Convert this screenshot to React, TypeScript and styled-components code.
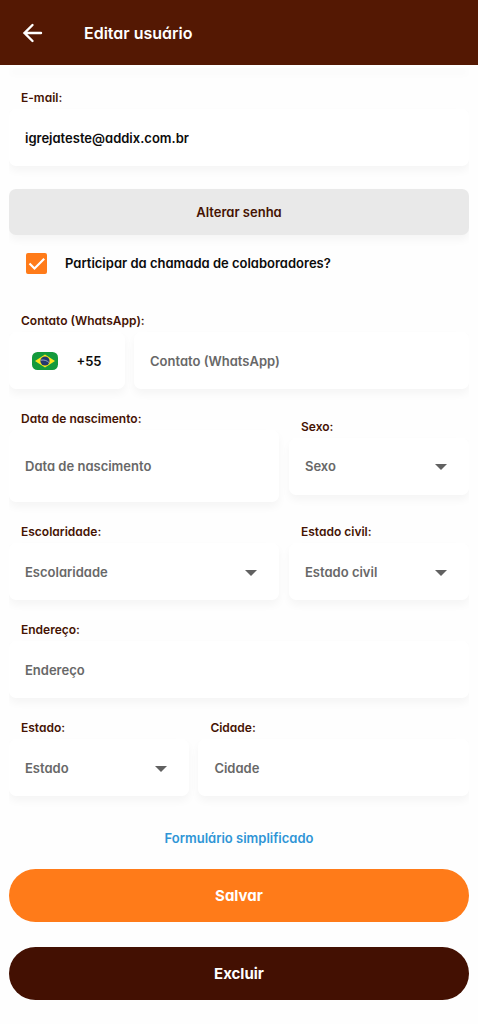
import React from "react";
import styled, { createGlobalStyle, css } from "styled-components";

const color = {
  header: "#541803",
  label: "#451303",
  page: "#fefefe",
  muted: "#686868",
  orange: "#ff7b19",
  dark: "#431002",
  link: "#2f95d6",
};

const GlobalStyle = createGlobalStyle`
  *, *::before, *::after { box-sizing: border-box; }
  body {
    margin: 0;
    background: ${color.page};
    color: #0c0c0c;
    font-family: Inter, "Liberation Sans", sans-serif;
    font-feature-settings: "cv11" 1;
  }
  button, input, select {
    font: inherit;
    font-feature-settings: inherit;
    color: inherit;
  }
`;

const raised = css`
  background: #ffffff;
  border-radius: 7px;
  box-shadow: 0 5px 8px rgba(0, 0, 0, 0.04);
`;

const Header = styled.header`
  position: relative;
  z-index: 1;
  display: flex;
  align-items: center;
  gap: 36px;
  height: 65px;
  padding: 0 18px;
  background: ${color.header};
  color: #ffffff;
`;

const BackButton = styled.button`
  display: flex;
  padding: 0;
  border: 0;
  background: none;
  cursor: pointer;
`;

const Title = styled.h1`
  margin: 0;
  font-size: 16px;
  line-height: 24px;
  font-weight: 600;
`;

const Form = styled.form`
  display: flex;
  flex-direction: column;
  gap: 23px;
  margin: 0 9px;
  padding-bottom: 24px;
  overflow-x: clip;
`;

const PreviousField = styled.div`
  ${raised}
  height: 3px;
  border-radius: 0 0 7px 7px;
`;

const Row = styled.div<{ $columns: string; $gap?: number }>`
  display: grid;
  grid-template-columns: ${(p) => p.$columns};
  align-items: center;
  gap: ${(p) => p.$gap ?? 9}px;
`;

const Field = styled.div`
  display: flex;
  flex-direction: column;
  gap: 4px;
  min-width: 0;
`;

const Label = styled.label`
  padding: 0 12px;
  color: ${color.label};
  font-size: 12px;
  line-height: 14px;
  font-weight: 600;
`;

const Input = styled.input<{ $tall?: boolean }>`
  ${raised}
  width: 100%;
  min-width: 0;
  height: ${(p) => (p.$tall ? 72 : 57)}px;
  padding: 0 16px;
  border: 0;
  outline: 0;
  font-size: 13px;
  font-weight: 600;
  &::placeholder {
    color: ${color.muted};
    opacity: 1;
  }
`;

const SelectBox = styled.div`
  ${raised}
  display: grid;
  align-items: center;
  & > * {
    grid-area: 1 / 1;
  }
`;

const SelectControl = styled.select`
  appearance: none;
  width: 100%;
  height: 57px;
  padding: 0 48px 0 16px;
  border: 0;
  outline: 0;
  background: none;
  color: ${color.muted};
  font-size: 13px;
  font-weight: 600;
`;

const Caret = styled.svg`
  justify-self: end;
  margin-right: 22px;
  pointer-events: none;
`;

const CountryButton = styled.button`
  ${raised}
  display: flex;
  align-items: center;
  justify-content: center;
  gap: 18px;
  height: 57px;
  padding: 0;
  border: 0;
  font-size: 13px;
  font-weight: 600;
`;

const PasswordButton = styled.button`
  ${raised}
  height: 46px;
  border: 0;
  background: #e9e9e9;
  color: ${color.label};
  font-size: 13px;
  font-weight: 600;
`;

const PasswordGroup = styled.div`
  display: flex;
  flex-direction: column;
`;

const CheckRow = styled.label`
  display: flex;
  align-items: center;
  gap: 18px;
  height: 56px;
  padding: 0 17px;
  font-size: 13px;
  font-weight: 600;
`;

const CheckMark = styled.span`
  display: grid;
  & > * {
    grid-area: 1 / 1;
  }
`;

const CheckInput = styled.input`
  appearance: none;
  width: 21px;
  height: 21px;
  margin: 0;
  border: 2px solid ${color.orange};
  border-radius: 2px;
  &:checked {
    background: ${color.orange};
  }
  & + svg {
    pointer-events: none;
  }
  &:not(:checked) + svg {
    visibility: hidden;
  }
`;

const Footer = styled.div`
  display: flex;
  flex-direction: column;
  align-items: stretch;
  padding-top: 9px;
`;

const SimpleLink = styled.a`
  align-self: center;
  margin-bottom: 21px;
  color: ${color.link};
  font-size: 13px;
  line-height: 20px;
  font-weight: 600;
  text-decoration: none;
`;

const Actions = styled.div`
  display: flex;
  flex-direction: column;
  gap: 25px;
`;

const ActionButton = styled.button<{ $tone: string }>`
  height: 53px;
  border: 0;
  border-radius: 27px;
  background: ${(p) => p.$tone};
  color: #ffffff;
  font-size: 15px;
  font-weight: 700;
`;

function BrazilFlag() {
  return (
    <svg width="26" height="18" viewBox="0 0 26 18" role="img" aria-label="Brasil">
      <rect width="26" height="18" rx="5.5" fill="#149a3c" />
      <path d="M13 2.500 23 9 13 15.500 3 9Z" fill="#fbe51d" />
      <circle cx="13" cy="9" r="4.600" fill="#24386f" />
      <path d="M8.700 8.200c3.200-.7 6.300.3 8.500 2.500" fill="none" stroke="#9fb0cc" strokeWidth="0.900" />
    </svg>
  );
}

function SelectField({ id, text }: { id: string; text: string }) {
  return (
    <Field>
      <Label htmlFor={id}>{text}:</Label>
      <SelectBox>
        <SelectControl id={id} defaultValue="">
          <option value="">{text}</option>
        </SelectControl>
        <Caret width="12" height="8" viewBox="0 0 12 8" aria-hidden="true">
          <path d="M0 2h12L6 8Z" fill="#616161" />
        </Caret>
      </SelectBox>
    </Field>
  );
}

function TextField({ id, text, tall }: { id: string; text: string; tall?: boolean }) {
  return (
    <Field>
      <Label htmlFor={id}>{text}:</Label>
      <Input id={id} placeholder={text} $tall={tall} />
    </Field>
  );
}

export default function App() {
  return (
    <>
      <GlobalStyle />
      <Header>
        <BackButton type="button" aria-label="Voltar">
          <svg width="30" height="30" viewBox="0 0 30 30" fill="none" stroke="#fff" strokeWidth="2.400" strokeLinecap="round">
            <path d="M23 15H6.500M14.500 7l-8 8 8 8" />
          </svg>
        </BackButton>
        <Title>Editar usuário</Title>
      </Header>
      <Form onSubmit={(e) => e.preventDefault()}>
        <PreviousField />
        <Field>
          <Label htmlFor="email">E-mail:</Label>
          <Input id="email" type="email" defaultValue="igrejateste@addix.com.br" />
        </Field>
        <PasswordGroup>
          <PasswordButton type="button">Alterar senha</PasswordButton>
          <CheckRow>
            <CheckMark>
              <CheckInput type="checkbox" defaultChecked />
              <svg width="21" height="21" viewBox="0 0 21 21" fill="none" stroke="#fff" strokeWidth="2.200" aria-hidden="true">
                <path d="m3.500 10.500 5 5 9.700-9.700" />
              </svg>
            </CheckMark>
            Participar da chamada de colaboradores?
          </CheckRow>
        </PasswordGroup>
        <Field>
          <Label htmlFor="contato">Contato (WhatsApp):</Label>
          <Row $columns="116px minmax(0, 1fr)">
            <CountryButton type="button">
              <BrazilFlag />
              +55
            </CountryButton>
            <Input id="contato" type="tel" placeholder="Contato (WhatsApp)" />
          </Row>
        </Field>
        <Row $columns="3fr 2fr" $gap={10}>
          <TextField id="nascimento" text="Data de nascimento" tall />
          <SelectField id="sexo" text="Sexo" />
        </Row>
        <Row $columns="3fr 2fr" $gap={10}>
          <SelectField id="escolaridade" text="Escolaridade" />
          <SelectField id="estado-civil" text="Estado civil" />
        </Row>
        <TextField id="endereco" text="Endereço" />
        <Row $columns="2fr 3fr">
          <SelectField id="estado" text="Estado" />
          <TextField id="cidade" text="Cidade" />
        </Row>
        <Footer>
          <SimpleLink href="#simplificado">Formulário simplificado</SimpleLink>
          <Actions>
            <ActionButton type="submit" $tone={color.orange}>Salvar</ActionButton>
            <ActionButton type="button" $tone={color.dark}>Excluir</ActionButton>
          </Actions>
        </Footer>
      </Form>
    </>
  );
}
